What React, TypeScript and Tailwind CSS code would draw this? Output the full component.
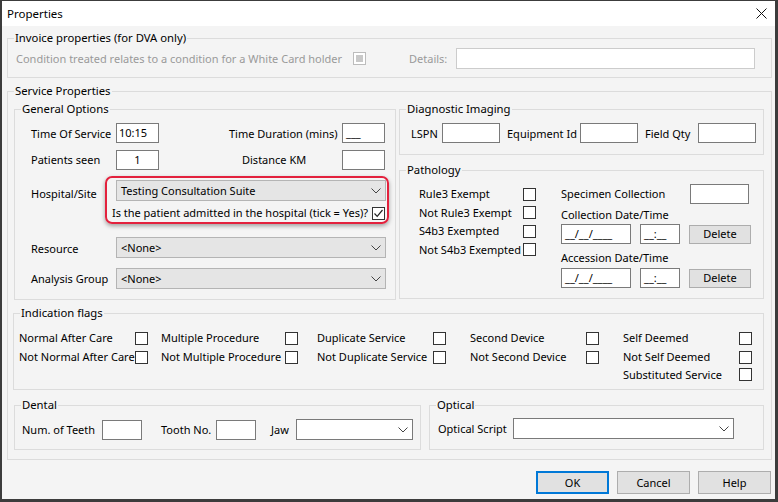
import type { ReactNode } from "react";

function Group({ title, className, children }: { title: string; className: string; children?: ReactNode }) {
  return (
    <fieldset className={`border border-[#dcdcdc] p-0 m-0 min-w-0 ${className}`}>
      <legend className="ml-[6px] px-[1px] text-[11.3px] leading-[16px]">{title}</legend>
      {children}
    </fieldset>
  );
}

function Check({ checked = false, disabled = false }: { checked?: boolean; disabled?: boolean }) {
  if (disabled) {
    return (
      <div className="w-[13px] h-[13px] shrink-0 border border-[#bcbcbc] bg-white flex items-center justify-center">
        <div className="w-[7px] h-[7px] bg-[#c8c8c8]" />
      </div>
    );
  }
  return (
    <div className="w-[13px] h-[13px] shrink-0 border border-[#333] bg-white flex items-center justify-center">
      {checked && (
        <svg width="11" height="11" viewBox="0 0 11 11">
          <polyline points="1.5,5.5 4.2,8.3 9.5,2" fill="none" stroke="#222" strokeWidth="1.2" />
        </svg>
      )}
    </div>
  );
}

function Field({ className, children }: { className: string; children?: ReactNode }) {
  return (
    <div className={`h-[20px] shrink-0 border border-[#7a7a7a] bg-white flex items-center ${className}`}>
      {children}
    </div>
  );
}

function Chevron() {
  return (
    <svg width="10" height="6" viewBox="0 0 10 6" className="shrink-0">
      <polyline points="0.5,0.5 5,5 9.5,0.5" fill="none" stroke="#444" strokeWidth="1" />
    </svg>
  );
}

function Select({ value, white = false, className }: { value?: string; white?: boolean; className: string }) {
  return (
    <div
      className={`h-[21px] shrink-0 border flex items-center justify-between pl-[4px] pr-[4px] ${
        white ? "bg-white border-[#7a7a7a]" : "bg-[#e5e5e5] border-[#b4b4b4]"
      } ${className}`}
    >
      <span className="whitespace-nowrap">{value}</span>
      <Chevron />
    </div>
  );
}

function Btn({ label, primary = false, className }: { label: string; primary?: boolean; className: string }) {
  return (
    <div
      className={`bg-[#e1e1e1] flex items-center justify-center ${
        primary ? "border-2 border-[#0078d7]" : "border border-[#adadad]"
      } ${className}`}
    >
      {label}
    </div>
  );
}

function Flag({ label, w }: { label: string; w: string }) {
  return (
    <div className="flex items-center">
      <span className={`whitespace-nowrap ${w}`}>{label}</span>
      <Check />
    </div>
  );
}

export default function App() {
  return (
    <div
      className="w-[778px] h-[502px] bg-[#3c3c3c] pl-[2px] pt-[1px] pr-[3px] pb-[3px] text-[11px] leading-[16px] text-black"
      style={{ fontFamily: '"Noto Sans", "Open Sans", sans-serif' }}
    >
      <div className="w-full h-full flex flex-col bg-[#f4f4f4]">
        {/* title bar */}
        <div className="h-[25px] bg-white flex items-center justify-between pl-[5px] pr-[8px] shrink-0">
          <span className="text-[11.5px]">Properties</span>
          <svg width="11" height="11" viewBox="0 0 11 11">
            <path d="M0.5 0.5 L10.5 10.5 M10.5 0.5 L0.5 10.5" stroke="#111" strokeWidth="1" />
          </svg>
        </div>

        {/* invoice properties */}
        <Group title="Invoice properties (for DVA only)" className="ml-[5px] mt-[4px] w-[765px] h-[48px]">
          <div className="mt-[2px] h-[21px] flex items-center pl-[8px] text-[#9a9a9a]">
            <span className="whitespace-nowrap w-[337px]">Condition treated relates to a condition for a White Card holder</span>
            <Check disabled />
            <span className="ml-[43px] w-[47px]">Details:</span>
            <div className="w-[299px] h-[21px] border border-[#cccccc] bg-white" />
          </div>
        </Group>

        {/* service properties */}
        <Group title="Service Properties" className="ml-[5px] mt-[5px] w-[765px] h-[377px]">
          <div className="flex mt-[2px]">
            {/* general options */}
            <Group title="General Options" className="ml-[6px] w-[382px] h-[199px]">
              <div className="pl-[16px]">
                <div className="mt-[6px] flex items-center h-[20px]">
                  <span className="w-[85px] whitespace-nowrap pt-[1px]">Time Of Service</span>
                  <Field className="w-[43px] pl-[2px]">10:15</Field>
                  <span className="w-[183px] pl-[70px] whitespace-nowrap pt-[1px]">Time Duration (mins)</span>
                  <Field className="w-[43px] pl-[3px]">___</Field>
                </div>
                <div className="mt-[7px] flex items-center h-[20px]">
                  <span className="w-[85px] whitespace-nowrap">Patients seen</span>
                  <Field className="w-[43px] justify-center">1</Field>
                  <span className="w-[183px] pl-[83px] whitespace-nowrap">Distance KM</span>
                  <Field className="w-[43px]" />
                </div>
                <div className="mt-[6px] flex items-start">
                  <span className="w-[74px] mt-[10px] whitespace-nowrap">Hospital/Site</span>
                  <div className="w-[284px] h-[48px] border-2 border-[#e3213d] rounded-[7px] shadow-[0_2px_4px_rgba(0,0,0,0.35)] pl-[9px] pt-[2px]">
                    <Select value="Testing Consultation Suite" className="w-[270px]" />
                    <div className="mt-[4px] h-[16px] flex items-center justify-end gap-[4px] pr-[2px] -ml-[5px]">
                      <span className="whitespace-nowrap">Is the patient admitted in the hospital (tick = Yes)?</span>
                      <Check checked />
                    </div>
                  </div>
                </div>
                <div className="mt-[13px] flex items-center">
                  <span className="w-[85px] whitespace-nowrap pt-[3px]">Resource</span>
                  <Select value="<None>" className="w-[270px]" />
                </div>
                <div className="mt-[10px] flex items-center">
                  <span className="w-[85px] whitespace-nowrap">Analysis Group</span>
                  <Select value="<None>" className="w-[270px]" />
                </div>
              </div>
            </Group>

            {/* right column */}
            <div className="ml-[3px] flex flex-col">
              <Group title="Diagnostic Imaging" className="w-[365px] h-[54px]">
                <div className="mt-[6px] flex items-center pl-[11px]">
                  <span className="w-[31px] pt-[1px]">LSPN</span>
                  <Field className="w-[58px]" />
                  <span className="ml-[7px] w-[73px] whitespace-nowrap pt-[1px]">Equipment Id</span>
                  <Field className="w-[58px]" />
                  <span className="ml-[7px] w-[53px] whitespace-nowrap pt-[1px]">Field Qty</span>
                  <Field className="w-[58px]" />
                </div>
              </Group>

              <Group title="Pathology" className="mt-[7px] w-[365px] h-[137px]">
                <div className="flex pl-[19px]">
                  <div className="mt-[7px] flex flex-col">
                    {["Rule3 Exempt", "Not Rule3 Exempt", "S4b3 Exempted", "Not S4b3 Exempted"].map((l) => (
                      <div key={l} className="h-[18.5px] flex items-center">
                        <span className="w-[104px] whitespace-nowrap">{l}</span>
                        <Check />
                      </div>
                    ))}
                  </div>
                  <div className="ml-[25px] flex flex-col">
                    <div className="mt-[6px] flex items-center">
                      <span className="w-[129px] whitespace-nowrap">Specimen Collection</span>
                      <Field className="w-[59px]" />
                    </div>
                    <div className="mt-[3px] whitespace-nowrap">Collection Date/Time</div>
                    <div className="mt-[1px] flex items-center">
                      <Field className="w-[70px] pl-[3px]">__/__/____</Field>
                      <Field className="ml-[9px] w-[40px] pl-[3px]">__:__</Field>
                      <Btn label="Delete" className="ml-[9px] w-[62px] h-[19px]" />
                    </div>
                    <div className="mt-[6px] whitespace-nowrap">Accession Date/Time</div>
                    <div className="mt-[2px] flex items-center">
                      <Field className="w-[70px] pl-[3px]">__/__/____</Field>
                      <Field className="ml-[9px] w-[40px] pl-[3px]">__:__</Field>
                      <Btn label="Delete" className="ml-[9px] w-[62px] h-[19px]" />
                    </div>
                  </div>
                </div>
              </Group>
            </div>
          </div>

          {/* indication flags */}
          <Group title="Indication flags" className="ml-[5px] mt-[5px] w-[751px] h-[85px]">
            <div className="mt-[7.5px] pl-[5px] grid grid-cols-[142px_156px_153px_153px_130px] auto-rows-[19px]">
              <Flag label="Normal After Care" w="w-[116px]" />
              <Flag label="Multiple Procedure" w="w-[124px]" />
              <Flag label="Duplicate Service" w="w-[116px]" />
              <Flag label="Second Device" w="w-[116px]" />
              <Flag label="Self Deemed" w="w-[116px]" />
              <Flag label="Not Normal After Care" w="w-[116px]" />
              <Flag label="Not Multiple Procedure" w="w-[124px]" />
              <Flag label="Not Duplicate Service" w="w-[116px]" />
              <Flag label="Not Second Device" w="w-[116px]" />
              <Flag label="Not Self Deemed" w="w-[116px]" />
              <div className="col-start-5">
                <Flag label="Substituted Service" w="w-[116px]" />
              </div>
            </div>
          </Group>

          <div className="flex mt-[7px]">
            <Group title="Dental" className="ml-[6px] w-[407px] h-[53px]">
              <div className="mt-[6px] flex items-center pl-[7px]">
                <span className="w-[80px] whitespace-nowrap">Num. of Teeth</span>
                <Field className="w-[40px]" />
                <span className="ml-[19px] w-[55px] whitespace-nowrap">Tooth No.</span>
                <Field className="w-[40px]" />
                <span className="ml-[15px] w-[25px]">Jaw</span>
                <Select white className="w-[117px] h-[20px]" />
              </div>
            </Group>
            <Group title="Optical" className="ml-[8px] w-[335px] h-[53px]">
              <div className="mt-[5px] flex items-center pl-[8px]">
                <span className="w-[75px] whitespace-nowrap">Optical Script</span>
                <Select white className="w-[221px] h-[20px]" />
              </div>
            </Group>
          </div>
        </Group>

        {/* buttons */}
        <div className="mt-[11px] flex justify-end gap-[8px] pr-[4px]">
          <Btn label="OK" primary className="w-[73px] h-[23px]" />
          <Btn label="Cancel" className="w-[73px] h-[23px]" />
          <Btn label="Help" className="w-[73px] h-[23px]" />
        </div>
      </div>
    </div>
  );
}
